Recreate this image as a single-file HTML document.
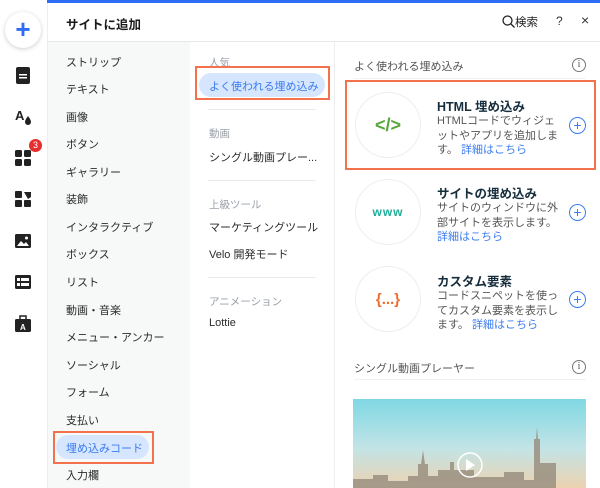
<html><head><style>
*{margin:0;padding:0;box-sizing:border-box}
body{width:600px;height:488px;overflow:hidden;background:#fff;font-family:"Liberation Sans","Noto Sans CJK JP",sans-serif;color:#20303c;position:relative}
.a{position:absolute;white-space:nowrap}
.c1{font-size:11px;left:66px;color:#2b2b2b}
.g{font-size:10.5px;color:#9aa0a8}
.t{font-size:11px;color:#2b2b2b;left:209px}
.hr{position:absolute;height:1px;background:#e8eaec}
.circ{position:absolute;width:66px;height:66px;border-radius:50%;border:1px solid #eeeeee;display:flex;align-items:center;justify-content:center;font-weight:bold}
.ti{font-size:12.5px;font-weight:bold;left:437px;color:#162d3d}
.d{font-size:11px;left:437px;color:#555;line-height:14.5px;white-space:normal;width:123px;word-break:break-all}
.d b{font-weight:normal;color:#3b7cf0}
.pl{position:absolute;width:17px;height:17px;border:1.3px solid #3b7cf0;border-radius:50%;color:#3b7cf0;font-size:14px;line-height:14px;text-align:center;left:569px}
.ic{position:absolute;left:15px}
.info{position:absolute;left:572px;width:14px;height:14px;border:1px solid #777;border-radius:50%;font-size:10px;text-align:center;line-height:12px;color:#555;font-family:"Liberation Serif",serif}
</style></head><body>
<div class="a" style="left:47px;top:0;width:553px;height:3px;background:#2f6cf6"></div>
<div class="a" style="left:47px;top:41px;width:553px;height:1px;background:#e6e8ea"></div>
<div class="a" style="left:47px;top:42px;width:143px;height:446px;background:#f7f8f8"></div>
<div class="a" style="left:334px;top:42px;width:1px;height:446px;background:#eceeef"></div>
<div class="a" style="left:47px;top:3px;width:1px;height:485px;background:#eceeef"></div>
<div class="a" style="left:66px;top:14px;font-size:12.5px;font-weight:bold;color:#1a1a1a">サイトに追加</div>
<div class="a" style="left:502px;top:14px;font-size:11.5px;color:#222"><svg width="13" height="13" viewBox="0 0 13 13" style="vertical-align:-2px"><circle cx="5.5" cy="5.5" r="4.5" fill="none" stroke="#222" stroke-width="1.3"/><path d="M9 9l3.5 3.5" stroke="#222" stroke-width="1.3"/></svg>検索</div>
<div class="a" style="left:556px;top:14px;font-size:12px;color:#333">?</div>
<div class="a" style="left:581px;top:12px;font-size:14px;color:#333">×</div>
<!-- rail -->
<div class="a" style="left:5px;top:12px;width:36px;height:36px;border-radius:50%;background:#fff;box-shadow:0 1px 5px rgba(0,0,0,.2);color:#2f6cf6;font-size:26px;font-weight:bold;text-align:center;line-height:34px">+</div>
<svg class="ic" style="top:67px" width="16" height="17"><rect x="1" y="0" width="14" height="17" rx="2" fill="#222"/><rect x="4" y="7" width="8" height="1.5" fill="#fff"/><rect x="4" y="10" width="8" height="1.5" fill="#fff"/></svg>
<svg class="ic" style="top:108px" width="18" height="17"><text x="0" y="12" font-size="13" font-weight="bold" fill="#222" font-family="Liberation Sans">A</text><path d="M13 8q-3 4-3 6a3 3 0 006 0q0-2-3-6z" fill="#222"/></svg>
<svg class="ic" style="top:150px" width="17" height="17"><rect x="0" y="0" width="7" height="7" rx="1.5" fill="#222"/><rect x="9" y="0" width="7" height="7" rx="1.5" fill="#222"/><rect x="0" y="9" width="7" height="7" rx="1.5" fill="#222"/><rect x="9" y="9" width="7" height="7" rx="1.5" fill="#222"/></svg>
<div class="a" style="left:29px;top:139px;width:13px;height:13px;border-radius:50%;background:#e62e2e;color:#fff;font-size:9px;text-align:center;line-height:13px">3</div>
<svg class="ic" style="top:191px" width="17" height="17"><rect x="0" y="0" width="7" height="7" rx="1" fill="#222"/><rect x="0" y="9" width="7" height="7" rx="1" fill="#222"/><rect x="9" y="9" width="7" height="7" rx="1" fill="#222"/><path d="M9 1h7v5l-3 2z" fill="#222"/></svg>
<svg class="ic" style="top:234px" width="17" height="15"><rect x="0" y="0" width="16" height="14" rx="1.5" fill="#222"/><path d="M2 12l4-5 3 3 2-2 3 4z" fill="#fff"/><circle cx="11.5" cy="4" r="1.5" fill="#fff"/></svg>
<svg class="ic" style="top:275px" width="17" height="15"><rect x="0" y="0" width="16" height="14" rx="1.5" fill="#222"/><rect x="2" y="3" width="3" height="3" fill="#fff"/><rect x="2" y="8" width="3" height="3" fill="#fff"/><rect x="6" y="3" width="8" height="3" fill="#fff"/><rect x="6" y="8" width="8" height="3" fill="#fff"/></svg>
<svg class="ic" style="top:315px" width="17" height="17"><rect x="0" y="4" width="16" height="13" rx="1.5" fill="#222"/><path d="M5 4V1h6v3" fill="none" stroke="#222" stroke-width="1.5"/><text x="5" y="15" font-size="8" font-weight="bold" fill="#fff" font-family="Liberation Sans">A</text></svg>
<!-- col1 -->
<div class="a c1" style="top:54px">ストリップ</div>
<div class="a c1" style="top:81px">テキスト</div>
<div class="a c1" style="top:109px">画像</div>
<div class="a c1" style="top:136px">ボタン</div>
<div class="a c1" style="top:164px">ギャラリー</div>
<div class="a c1" style="top:191px">装飾</div>
<div class="a c1" style="top:219px">インタラクティブ</div>
<div class="a c1" style="top:246px">ボックス</div>
<div class="a c1" style="top:274px">リスト</div>
<div class="a c1" style="top:302px">動画・音楽</div>
<div class="a c1" style="top:329px">メニュー・アンカー</div>
<div class="a c1" style="top:357px">ソーシャル</div>
<div class="a c1" style="top:384px">フォーム</div>
<div class="a c1" style="top:412px">支払い</div>
<div class="a" style="left:53px;top:431px;width:101px;height:33px;border:2px solid #f4714e"></div>
<div class="a" style="left:56px;top:435px;width:93px;height:24px;border-radius:12px;background:#d6e6fe"></div>
<div class="a c1" style="top:440px;color:#3b7cf0">埋め込みコード</div>
<div class="a c1" style="top:467px">入力欄</div>
<!-- col2 -->
<div class="a g" style="left:209px;top:55px">人気</div>
<div class="a" style="left:195px;top:66px;width:135px;height:34px;border:2px solid #f4714e"></div>
<div class="a" style="left:199px;top:73px;width:126px;height:24px;border-radius:12px;background:#d6e6fe"></div>
<div class="a" style="left:209px;top:78px;font-size:11px;color:#3b7cf0">よく使われる埋め込み</div>
<div class="hr" style="left:208px;top:109px;width:108px"></div>
<div class="a g" style="left:209px;top:126px">動画</div>
<div class="a t" style="top:149px">シングル動画プレー...</div>
<div class="hr" style="left:208px;top:180px;width:108px"></div>
<div class="a g" style="left:209px;top:197px">上級ツール</div>
<div class="a t" style="top:219px">マーケティングツール</div>
<div class="a t" style="top:246px">Velo 開発モード</div>
<div class="hr" style="left:208px;top:277px;width:108px"></div>
<div class="a g" style="left:209px;top:294px">アニメーション</div>
<div class="a t" style="top:317px">Lottie</div>
<!-- col3 -->
<div class="a" style="left:354px;top:58px;font-size:11px;color:#555">よく使われる埋め込み</div>
<div class="info" style="top:58px">i</div>
<div class="hr" style="left:354px;top:78px;width:232px;background:#f0f1f2"></div>
<div class="a" style="left:345px;top:80px;width:251px;height:90px;border:2px solid #f4714e"></div>
<div class="circ" style="left:355px;top:92px;color:#5aa53c;font-size:18px">&lt;/&gt;</div>
<div class="a ti" style="top:96px">HTML 埋め込み</div>
<div class="a d" style="top:114px">HTMLコードでウィジェットやアプリを追加します。 <b>詳細はこちら</b></div>
<div class="pl" style="top:117px">+</div>
<div class="circ" style="left:355px;top:179px;color:#1fae9a;font-size:12px;letter-spacing:1px">www</div>
<div class="a ti" style="top:183px">サイトの埋め込み</div>
<div class="a d" style="top:201px">サイトのウィンドウに外部サイトを表示します。<br><b>詳細はこちら</b></div>
<div class="pl" style="top:204px">+</div>
<div class="circ" style="left:355px;top:266px;color:#f06a2a;font-size:15px">{...}</div>
<div class="a ti" style="top:271px">カスタム要素</div>
<div class="a d" style="top:289px">コードスニペットを使ってカスタム要素を表示します。 <b>詳細はこちら</b></div>
<div class="pl" style="top:291px">+</div>
<div class="a" style="left:354px;top:360px;font-size:11px;color:#555">シングル動画プレーヤー</div>
<div class="info" style="top:360px">i</div>
<div class="hr" style="left:354px;top:379px;width:232px;background:#f0f1f2"></div>
<svg class="a" style="left:353px;top:399px" width="233" height="89" viewBox="0 0 233 89">
<defs><linearGradient id="s" x1="0" y1="0" x2="0" y2="1"><stop offset="0" stop-color="#7fd8e4"/><stop offset=".55" stop-color="#c2e4e6"/><stop offset="1" stop-color="#ecd2b0"/></linearGradient></defs>
<rect width="233" height="89" fill="url(#s)"/>
<path d="M0 89V80h20v-4h15v6h20v-5h10v-12h3l2-14 2 14h3v12h10v-6h12v-8h4v8h20v7h30v-5h20v8h10V40h2l1-12 1 12h2v24h16v25z" fill="#9a8f80" opacity=".85"/>
<circle cx="117" cy="66" r="12" fill="none" stroke="#fff" stroke-width="1.5"/><path d="M113 60v12l9-6z" fill="#fff"/>
</svg>
</body></html>
